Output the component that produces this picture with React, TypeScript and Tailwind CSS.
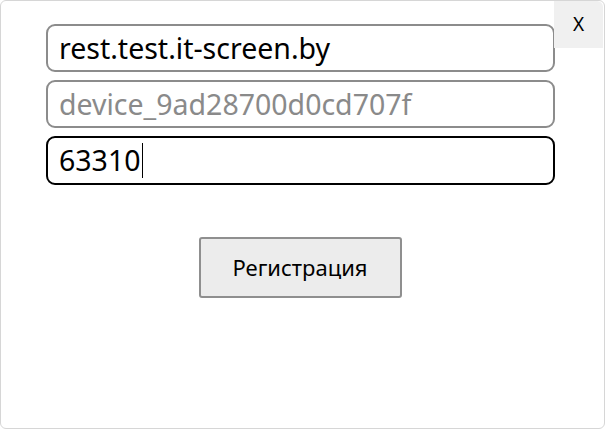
import React from "react";

export default function App() {
  const font = { fontFamily: '"Noto Sans", "Open Sans", sans-serif' };
  return (
    <div className="w-[605px] h-[429px] bg-white" style={font}>
      <div className="relative w-[605px] h-[429px] border border-[#d6d6d6] rounded-[6px] bg-white flex flex-col items-center">
        <div className="absolute right-[1px] top-0 w-[49px] h-[47px] bg-[#f0f0f0] rounded-tr-[6px] flex items-center justify-center text-[19px] text-black">
          X
        </div>
        <div className="w-[509px] mt-[23px] ml-[-4px] flex flex-col gap-[8px]">
          <div className="h-[48px] border-2 border-[#8c8c8c] rounded-[9px] flex items-center pl-[11px] text-[28.5px] text-black">
            rest.test.it-screen.by
          </div>
          <div className="h-[48px] border-2 border-[#8c8c8c] rounded-[9px] flex items-center pl-[11px] text-[28.5px] text-[#8a8a8a]">
            device_9ad28700d0cd707f
          </div>
          <div className="h-[49px] border-2 border-black rounded-[9px] flex items-center pl-[11px] text-[28.5px] text-black">
            63310<span className="inline-block w-px h-[35px] bg-black ml-[1px]" />
          </div>
        </div>
        <div className="mt-[52px] ml-[-5px] w-[203px] h-[61px] bg-[#ececec] border-2 border-[#8f8f8f] rounded-[3px] flex items-center justify-center text-[22px] text-black">
          Регистрация
        </div>
      </div>
    </div>
  );
}
